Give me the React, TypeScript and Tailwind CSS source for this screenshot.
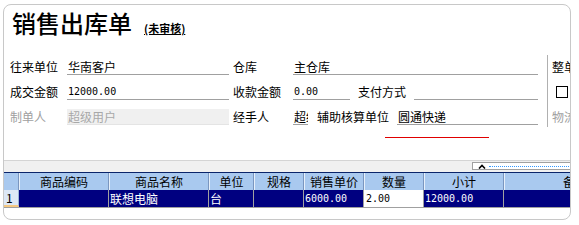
import React from 'react'

const num = "font-['DejaVu_Sans_Mono',monospace] text-[10px]"
const label = 'h-[16px] leading-[16px] shrink-0 whitespace-nowrap'
const input = 'h-[16px] leading-[16px] shrink-0 whitespace-nowrap overflow-hidden border-b border-[#a0a0a0] pl-[1px]'

const cols = [
  { name: '商品编码', w: 'w-[90px]' },
  { name: '商品名称', w: 'w-[100px]' },
  { name: '单位', w: 'w-[45px]' },
  { name: '规格', w: 'w-[50px]' },
  { name: '销售单价', w: 'w-[60px]' },
  { name: '数量', w: 'w-[60px]' },
  { name: '小计', w: 'w-[80px]' },
  { name: '备注', w: 'w-[142px]' },
]

const App = () => {
  return (
    <div className="w-[579px] h-[225px] bg-white overflow-hidden font-['Noto_Sans_CJK_SC','Noto_Sans',sans-serif] text-[12px] text-black">
      <div className="ml-[3px] mt-[4px] w-[568px] h-[216px] border border-[#c8c8c8] rounded-[8px] overflow-hidden">
        {/* title */}
        <div className="flex items-baseline pl-[8px] pt-[4px] h-[32px]">
          <span className="text-[24px] leading-[28px] font-medium">销售出库单</span>
          <span className="ml-[12px] text-[11px] font-bold underline">(未审核)</span>
        </div>

        {/* form */}
        <div className="flex mt-[13px] pl-[6px]">
          <div className="flex flex-col shrink-0">
            <div className="flex items-end h-[25px]">
              <div className={`${label} w-[57px]`}>往来单位</div>
              <div className={`${input} w-[162px]`}>华南客户</div>
              <div className={`${label} w-[60px] ml-[4px]`}>仓库</div>
              <div className={`${input} w-[245px]`}>主仓库</div>
            </div>
            <div className="flex items-end h-[25px]">
              <div className={`${label} w-[57px]`}>成交金额</div>
              <div className={`${input} ${num} w-[162px]`}>12000.00</div>
              <div className={`${label} w-[60px] ml-[4px]`}>收款金额</div>
              <div className={`${input} ${num} w-[57px]`}>0.00</div>
              <div className={`${label} w-[56px] ml-[8px]`}>支付方式</div>
              <div className={`${input} w-[124px]`}></div>
            </div>
            <div className="flex items-end h-[25px]">
              <div className={`${label} w-[57px] text-[#a0a0a0]`}>制单人</div>
              <div className={`${label} w-[162px] bg-[#f0f0f0] text-[#a8a8a8] pl-[1px] border-b border-[#e4e4e4]`}>超级用户</div>
              <div className={`${label} w-[60px] ml-[4px]`}>经手人</div>
              <div className={`${input} w-[15px]`}>超级用户</div>
              <div className={`${label} w-[80px] ml-[9px]`}>辅助核算单位</div>
              <div className={`${input} w-[141px]`}>圆通快递</div>
            </div>
          </div>
          <div className="ml-[9px] mt-[5px] w-px h-[72px] bg-[#b0b0b0] shrink-0" />
          <div className="flex flex-col shrink-0 ml-[4px]">
            <div className="flex items-end h-[25px]">
              <div className={label}>整单折扣</div>
            </div>
            <div className="flex items-end h-[25px]">
              <div className="h-[16px] flex items-center ml-[4px]">
                <div className="w-[12px] h-[12px] border border-black bg-white" />
              </div>
            </div>
            <div className="flex items-end h-[25px]">
              <div className={`${label} text-[#a0a0a0]`}>物流公司</div>
            </div>
          </div>
        </div>

        {/* red marker line */}
        <div className="mt-[10px] ml-[381px] w-[104px] h-px bg-[#e00000]" />

        {/* splitter band */}
        <div className="mt-[22px] h-[12px] border-t border-[#d4d4d4] bg-[#f0f0f0] flex">
          <div className="ml-[468px] mt-[1px] h-[8px] w-[120px] shrink-0 bg-white border border-[#a0a0a0] flex items-center">
            <svg width="8" height="5" viewBox="0 0 8 5" className="ml-[5px] shrink-0">
              <path d="M1 4.5 L4 1.5 L7 4.5" stroke="#000" strokeWidth="1.6" fill="none" />
            </svg>
            <div className="ml-[3px] flex-1 border-t border-dotted border-[#3399ff]" />
          </div>
        </div>

        {/* grid header */}
        <div className="flex h-[18px] border-t border-[#0a246a] bg-[#a9c9ef]">
          <div className="w-[15px] shrink-0 border-r border-[#7a96c0]" />
          {cols.map((c) => (
            <div
              key={c.name}
              className={`${c.w} shrink-0 border-l border-[#e6f0fb] border-r border-r-[#7a96c0] text-center leading-[17px] whitespace-nowrap`}
            >
              {c.name}
            </div>
          ))}
        </div>

        {/* data row */}
        <div className="flex h-[18px] border-b border-[#a0a0a0]">
          <div className="w-[15px] shrink-0 bg-[#dde8f6] border-r border-[#9cb4d4] border-b-2 border-b-[#f5c882] pl-[2px] leading-[16px]">1</div>
          <div className="w-[90px] shrink-0 bg-[#000080] border-r border-[#a0a0a0]" />
          <div className="w-[100px] shrink-0 bg-[#000080] border-r border-[#a0a0a0] text-white pl-[1px] leading-[17px]">联想电脑</div>
          <div className="w-[45px] shrink-0 bg-[#000080] border-r border-[#a0a0a0] text-white pl-[1px] leading-[17px]">台</div>
          <div className="w-[50px] shrink-0 bg-[#000080] border-r border-[#a0a0a0]" />
          <div className={`w-[60px] shrink-0 bg-[#000080] border-r border-[#a0a0a0] text-white pl-[1px] leading-[17px] ${num}`}>6000.00</div>
          <div className={`w-[60px] shrink-0 bg-white border-r border-[#a0a0a0] text-black pl-[2px] leading-[17px] ${num}`}>2.00</div>
          <div className={`w-[80px] shrink-0 bg-[#000080] border-r border-[#a0a0a0] text-white pl-[1px] leading-[17px] ${num}`}>12000.00</div>
          <div className="w-[142px] shrink-0 bg-[#000080]" />
        </div>
      </div>
    </div>
  )
}

export default App
